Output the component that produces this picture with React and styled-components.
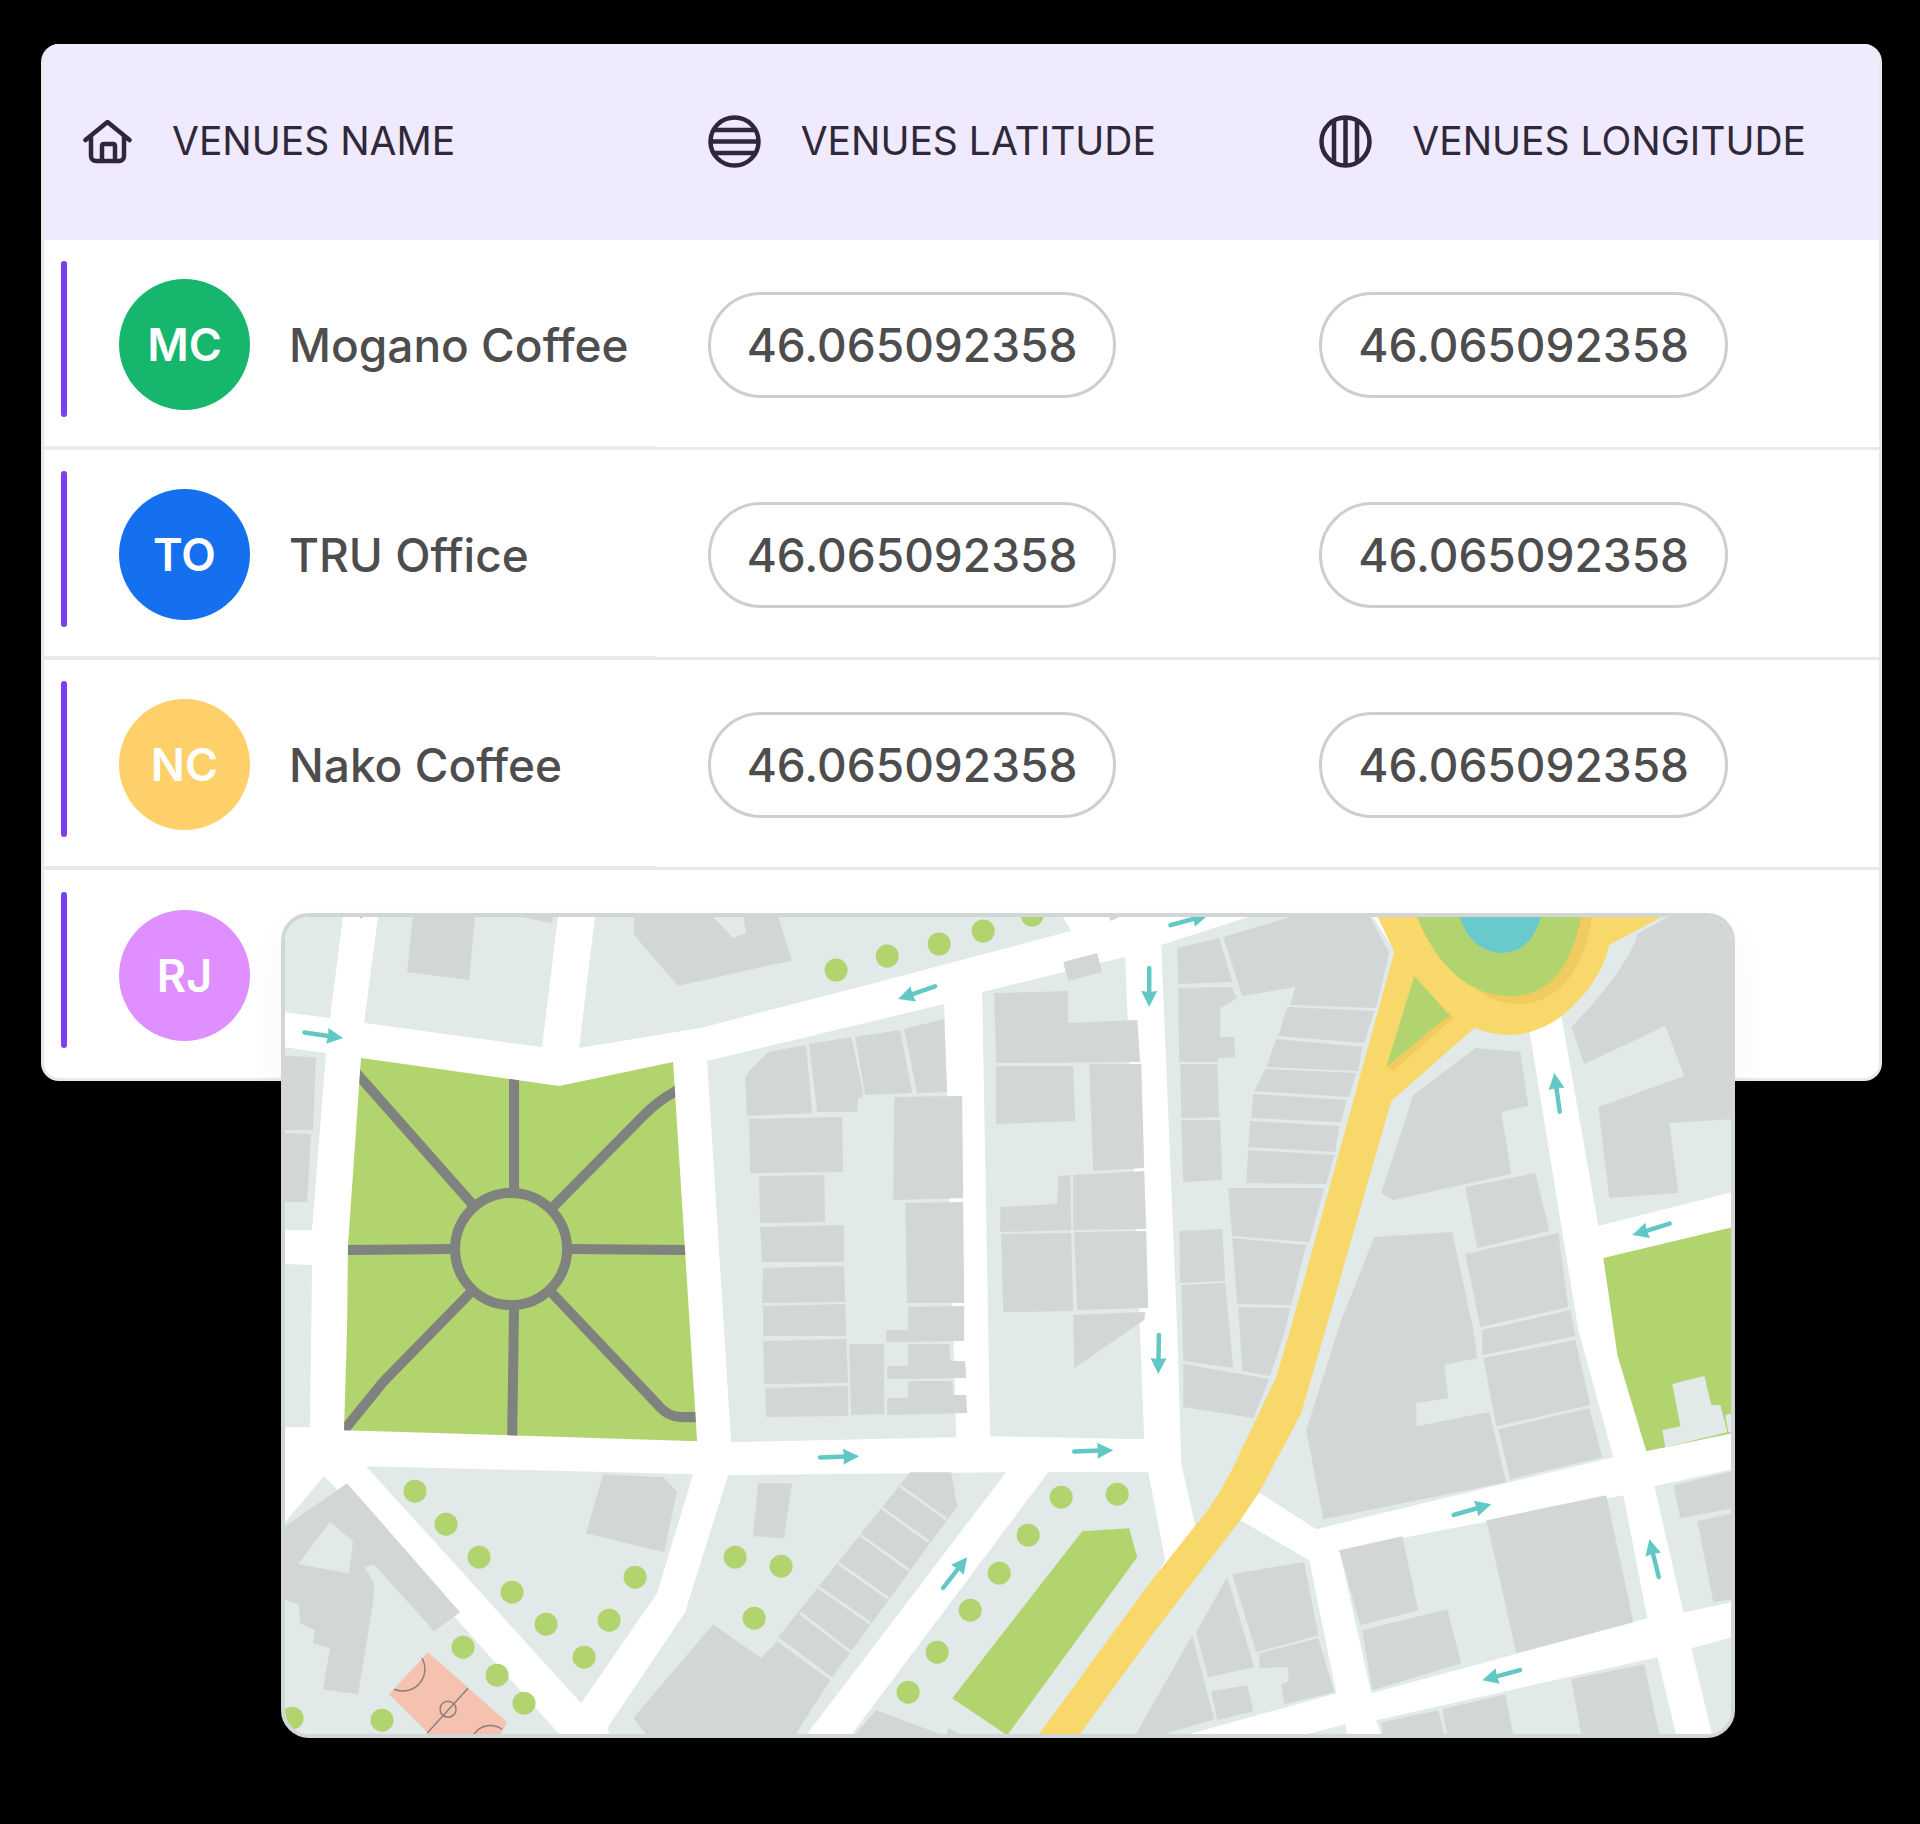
/**
 * @module VenuesOverview
 * @description Table of venues with their coordinates and a street map laid over its lower edge
 */

import styled, { createGlobalStyle } from "styled-components";

const c = {
  page: "#000000",
  surface: "#ffffff",
  header: "#efeafe",
  headerText: "#2e2838",
  text: "#4d4d4d",
  line: "#e9e9e9",
  pill: "#cecece",
  accent: "#7a3ff0",
  land: "#e1e9e9",
  building: "#d2d6d7",
  green: "#b2d46e",
  path: "#80827f",
  water: "#69cacc",
  arrow: "#62c8c5",
  road: "#ffffff",
  highway: "#f8d86a",
  highwayShade: "#efcb60",
  court: "#f4c2ae",
  courtLine: "#8f7f78",
};

const GlobalStyle = createGlobalStyle`
  *, *::before, *::after {
    box-sizing: border-box;
  }
  body {
    margin: 0;
    background: ${c.page};
    font-family: Inter, "Liberation Sans", sans-serif;
  }
`;

const Page = styled.main`
  padding: 44px 38px 80px 41px;
`;

const TableCard = styled.section`
  overflow: hidden;
  border: 3px solid ${c.line};
  border-top: none;
  border-radius: 18px;
  background: ${c.surface};
`;

const Table = styled.table`
  width: 100%;
  table-layout: fixed;
  border-collapse: separate;
  border-spacing: 0;
`;

const HeadCell = styled.th`
  height: 196px;
  padding: 0 0 2px ${(props) => (props.$first ? "39px" : "52px")};
  background: ${c.header};
  color: ${c.headerText};
  font-size: 39px;
  font-weight: 400;
  line-height: 48px;
  text-align: left;
  white-space: nowrap;
`;

const HeadLabel = styled.div`
  display: flex;
  align-items: center;
  gap: 40px;
`;

const HeadIcon = styled.svg`
  flex: none;
  fill: none;
  stroke: currentColor;
  stroke-width: 4.5;
  stroke-linecap: round;
  stroke-linejoin: round;
`;

const Cell = styled.td`
  height: 210px;
  padding: 3px 0 0 52px;
  border-bottom: 3px solid ${c.line};
  tr:last-child > & {
    height: 208px;
    border-bottom: none;
  }
`;

const NameCell = styled(Cell)`
  padding: 3px 0 0 17px;
  border-bottom-width: 4px;
`;

const Venue = styled.div`
  display: flex;
  align-items: center;
  color: ${c.text};
  font-size: 46px;
  font-weight: 500;
  line-height: 56px;
  white-space: nowrap;
`;

const Marker = styled.span`
  width: 6px;
  height: 156px;
  margin: 0 52px 12px 0;
  border-radius: 3px;
  background: ${c.accent};
`;

const Avatar = styled.span`
  display: grid;
  place-items: center;
  width: 131px;
  height: 131px;
  margin-right: 39px;
  border-radius: 50%;
  background: ${(props) => props.$color};
  color: ${c.surface};
  font-size: 45px;
  font-weight: 600;
`;

const Pill = styled.span`
  display: inline-block;
  padding: 22px 36px;
  border: 3px solid ${c.pill};
  border-radius: 53px;
  color: ${c.text};
  font-size: 46px;
  font-weight: 500;
  line-height: 56px;
  vertical-align: middle;
`;

const MapCard = styled.figure`
  position: relative;
  width: 79%;
  margin: -168px 0 0 240px;
  overflow: hidden;
  border: 4px solid ${c.building};
  border-radius: 28px;
  background: ${c.building};
  box-shadow: 0 16px 40px rgba(0, 0, 0, 0.04);
`;

const MapSvg = styled.svg`
  display: block;
  width: 100%;
  height: auto;
`;

function HomeIcon() {
  return (
    <HeadIcon width="49" height="45" viewBox="0 0 49 45" aria-hidden="true">
      <path d="M2.500 21 24.500 3 46.500 21M8 17v20a5 5 0 0 0 5 5h23a5 5 0 0 0 5-5V17" />
      <path d="M19 42V27q0-2 2-2h9q2 0 2 2v15" />
    </HeadIcon>
  );
}

function LatitudeIcon() {
  return (
    <HeadIcon width="53" height="53" viewBox="0 0 53 53" aria-hidden="true">
      <circle cx="26.5" cy="26.5" r="24" />
      <path d="M6 15h41M3 26.500h47M6 38h41" />
    </HeadIcon>
  );
}

function LongitudeIcon() {
  return (
    <HeadIcon width="53" height="53" viewBox="0 0 53 53" aria-hidden="true">
      <circle cx="26.5" cy="26.5" r="24" />
      <path d="M15 6v41M26.500 3v47M38 6v41" />
    </HeadIcon>
  );
}

const columns = [
  { label: "VENUES NAME", icon: HomeIcon },
  { label: "VENUES LATITUDE", icon: LatitudeIcon },
  { label: "VENUES LONGITUDE", icon: LongitudeIcon },
];

const venues = [
  { initials: "MC", name: "Mogano Coffee", color: "#16b76c", lat: "46.065092358", lng: "46.065092358" },
  { initials: "TO", name: "TRU Office", color: "#1570ef", lat: "46.065092358", lng: "46.065092358" },
  { initials: "NC", name: "Nako Coffee", color: "#fdd069", lat: "46.065092358", lng: "46.065092358" },
  { initials: "RJ", color: "#df8fff" },
];

// City blocks, the white left between them is the road network
const blocks = [
  "284,916 343,916 330,1018 284,1012",
  "378,916 364,1023 542,1047 558,916",
  "595,916 579,1048 700,1028 867,985 1071,931 1062,916",
  "284,1047 326,1053 312,1230 284,1230",
  "284,1264 312,1265 310,1427 284,1427",
  "707,1061 944,1004 956,1437 731,1442",
  "982,992 1125,957 1144,1439 990,1436",
  "1161,945 1251,916 1372,916 1400,960 1385,1120 1270,1440 1195,1526 1181,1463 1177,1330",
  "1440,1010 1529,1030 1578,1330 1613,1457 1316,1529 1255,1490 1320,1330 1390,1090",
  "1560,1010 1598,1226 1732,1192 1732,916 1600,916",
  "1654,1486 1732,1469 1732,1602 1683,1612",
  "1691,1648 1732,1637 1732,1735 1712,1735",
  "1339,1550 1623,1495 1647,1618 1371,1693",
  "1376,1720 1657,1657 1676,1735 1381,1735",
  "1240,1520 1309,1560 1336,1693 1185,1735 1060,1735 1210,1525",
  "1303,1735 1345,1724 1347,1735",
  "1048,1472 1148,1472 1165,1560 1060,1735 851,1735",
  "728,1475 1006,1472 806,1735 610,1735 607,1728 685,1612",
  "366,1466 693,1474 657,1593 581,1703",
  "324,1476 336,1488 455,1617 560,1735 284,1735 284,1523",
];

const buildings = [
  "413,916 475,916 469,980 407,972",
  "515,916 553,916 552,923",
  "634,916 634,935 678,986 770,965 792,961 778,916 743,916 746,933 733,938 712,916",
  "284,1056 316,1057 313,1130 284,1130",
  "284,1133 311,1134 307,1202 284,1202",
  "745,1078 749,1071 768,1052 806,1045 812,1113 747,1116",
  "809,1044 851,1037 863,1092 862,1097 858,1099 857,1112 817,1112",
  "855,1037 900,1030 912,1093 865,1095",
  "904,1029 944,1019 947,1092 917,1093",
  "749,1119 842,1117 843,1172 750,1173",
  "894,1097 962,1096 963,1198 893,1200",
  "759,1176 824,1175 825,1222 760,1223",
  "760,1227 844,1225 844,1262 762,1262",
  "763,1268 844,1266 845,1302 762,1303",
  "763,1306 845,1304 846,1336 763,1336",
  "763,1341 846,1339 848,1383 764,1384",
  "765,1388 848,1386 848,1416 766,1417",
  "849,1344 884,1344 884,1414 851,1415",
  "905,1203 963,1202 964,1303 907,1303",
  "908,1307 964,1306 964,1341 886,1342 886,1330 908,1330",
  "908,1344 949,1344 950,1361 965,1361 966,1378 887,1379 887,1366 908,1366",
  "908,1381 952,1381 953,1395 966,1395 967,1413 887,1415 887,1398 908,1398",
  "994,993 1068,991 1068,1023 1137,1020 1140,1062 996,1063",
  "996,1066 1073,1066 1075,1121 996,1124",
  "1089,1064 1141,1064 1144,1168 1093,1171",
  "1058,1176 1070,1175 1071,1230 1000,1232 1000,1207 1057,1204",
  "1073,1175 1144,1171 1146,1229 1073,1230",
  "1001,1234 1071,1233 1073,1311 1003,1312",
  "1074,1232 1146,1231 1148,1308 1077,1310",
  "1073,1315 1145,1312 1144,1320 1074,1368",
  "1063,962 1097,953 1102,972 1068,981",
  "1109,916 1122,916 1110,921",
  "1177,948 1219,938 1232,982 1178,984",
  "1223,937 1293,916 1369,916 1381,938 1389,953 1376,1008 1290,1005 1295,987 1242,996",
  "1178,988 1231,987 1237,998 1220,1008 1220,1037 1234,1037 1235,1057 1218,1058 1217,1062 1179,1062",
  "1180,1064 1217,1064 1219,1117 1181,1118",
  "1181,1120 1220,1120 1222,1180 1183,1182",
  "1179,1231 1222,1229 1225,1281 1180,1283",
  "1181,1285 1225,1283 1233,1368 1183,1361",
  "1183,1364 1269,1379 1253,1418 1183,1407",
  "1287,1007 1374,1011 1364,1043 1278,1036",
  "1276,1039 1362,1047 1358,1071 1266,1067",
  "1265,1069 1356,1073 1349,1097 1254,1091",
  "1253,1094 1346,1100 1341,1122 1251,1118",
  "1250,1121 1339,1126 1335,1152 1248,1147",
  "1248,1150 1334,1155 1326,1184 1246,1183",
  "1228,1188 1324,1188 1309,1242 1232,1236",
  "1232,1238 1306,1245 1291,1305 1237,1304",
  "1238,1307 1290,1308 1285,1330 1270,1376 1242,1371",
  "1475,1048 1520,1052 1528,1106 1501,1112 1511,1174 1393,1200 1381,1193 1413,1095",
  "1465,1187 1535,1173 1549,1231 1477,1248",
  "1465,1254 1558,1233 1568,1307 1480,1327",
  "1482,1330 1570,1310 1575,1336 1482,1355",
  "1483,1358 1575,1340 1590,1405 1496,1426",
  "1498,1429 1589,1408 1602,1457 1510,1479",
  "1374,1237 1452,1232 1473,1330 1477,1358 1444,1365 1448,1398 1416,1403 1416,1426 1489,1412 1506,1482 1323,1519 1306,1430 1341,1320",
  "1339,1550 1402,1536 1418,1610 1360,1625",
  "1362,1630 1447,1609 1461,1663 1372,1690",
  "1486,1520 1606,1495 1633,1622 1516,1653",
  "1673,1485 1732,1471 1732,1508 1680,1518",
  "1697,1521 1732,1513 1732,1599 1713,1602",
  "1381,1722 1438,1710 1444,1735 1383,1735",
  "1442,1709 1505,1694 1513,1735 1447,1735",
  "1571,1679 1644,1664 1659,1735 1581,1735",
  "1232,1574 1304,1562 1318,1635 1256,1652",
  "1227,1577 1254,1667 1208,1677 1196,1632",
  "1192,1635 1214,1719 1160,1735 1135,1735",
  "1211,1691 1247,1685 1253,1711 1217,1720",
  "1259,1653 1318,1638 1334,1692 1284,1704 1281,1684 1288,1681 1288,1667 1259,1668",
  "603,1474 663,1477 677,1491 664,1552 586,1533",
  "347,1483 460,1612 434,1631 374,1564 365,1567 374,1583 373,1603 358,1694 323,1689 330,1648 313,1643 315,1630 300,1623 299,1605 284,1599 284,1527",
  "758,1483 792,1483 784,1538 753,1536",
  "633,1718 713,1624 761,1658 777,1641 830,1680 795,1735 647,1735",
  "910,1472 951,1472 957,1506 832,1677 778,1637",
  "876,1710 938,1733 938,1735 854,1735",
  "948,1727 960,1735 946,1735",
];

// Land showing through a building or a park
const yards = [
  "330,1522 353,1541 349,1573 298,1564",
  "1662,1430 1680,1426 1672,1384 1704,1376 1711,1405 1720,1405 1727,1432 1665,1447",
  "1725,1415 1732,1413 1732,1432 1728,1432",
];

const parks = [
  "1603,1258 1732,1227 1732,1433 1646,1451 1617,1355 1612,1320",
  "1082,1531 1129,1528 1137,1557 1007,1735 952,1698",
];

const mainPark = "361,1058 559,1086 673,1062 697,1441 344,1430 347,1330 348,1245";

const trees = [
  [836, 970], [887, 956], [939, 944], [983, 931], [1032, 915],
  [415, 1491], [446, 1524], [479, 1557], [512, 1592], [546, 1624],
  [584, 1657], [609, 1620], [635, 1577], [463, 1647], [497, 1675],
  [524, 1703], [382, 1720], [292, 1718], [735, 1557], [781, 1566],
  [754, 1618], [1061, 1497], [1117, 1494], [1028, 1535], [999, 1573],
  [970, 1610], [937, 1652], [908, 1692],
];

// Tip of the arrow and its heading in degrees
const arrows = [
  [343, 1038, 8], [361, 919, 96], [898, 999, 161], [1149, 1007, 90],
  [1208, 915, -15], [1554, 1073, -98], [1632, 1235, 163], [859, 1456, -2],
  [1113, 1450, -2], [1158, 1374, 91], [967, 1557, -52], [1491, 1504, -16],
  [1649, 1539, -104], [1482, 1680, 165],
];

function StreetMap() {
  return (
    <MapSvg viewBox="285 917 1446 817" role="img" aria-label="Street map of the venues">
      <defs>
        <clipPath id="parkClip">
          <polygon points={mainPark} />
        </clipPath>
      </defs>
      <rect x="285" y="917" width="1446" height="817" fill={c.road} />
      <g fill={c.land}>
        {blocks.map((points) => (
          <polygon key={points} points={points} />
        ))}
      </g>
      <g fill={c.building}>
        {buildings.map((points) => (
          <polygon key={points} points={points} />
        ))}
        <path d="M1571 1027Q1626 970 1638 933L1670 916H1732V1119L1669 1123 1678 1193 1609 1198 1598 1107 1684 1076 1665 1026 1584 1064Z" />
      </g>
      <path
        d="M900 1486 946 1519M882 1508 929 1542M860 1535 909 1570M838 1563 888 1598M817 1586 870 1623M800 1613 852 1653M777 1638 832 1679"
        stroke={c.land}
        strokeWidth="3"
      />
      <g fill={c.green}>
        {parks.map((points) => (
          <polygon key={points} points={points} />
        ))}
        <polygon points={mainPark} />
      </g>
      <g fill={c.land}>
        {yards.map((points) => (
          <polygon key={points} points={points} />
        ))}
      </g>
      <g clipPath="url(#parkClip)" fill="none" stroke={c.path} strokeWidth="10">
        <circle cx="511" cy="1249" r="56" />
        <path d="M352 1068 474 1206M514 1070V1193M684 1085 674 1092Q658 1101 646 1113L552 1208M340 1250 455 1249M567 1249 694 1250M514 1305 512 1445M471 1292 383 1382 340 1435M551 1292 658 1405Q668 1417 682 1417H704" />
      </g>
      <g>
        <polygon points="428,1652 507,1722 500,1735 430,1735 389,1694" fill={c.court} />
        <g fill="none" stroke={c.courtLine} strokeWidth="1.500">
          <path d="M468 1688 427 1733M422 1658A22 22 0 0 1 394 1689M474 1734A20 20 0 0 1 502 1729" />
          <circle cx="448" cy="1709" r="8" />
        </g>
      </g>
      <path
        d="M1377 916 1394 952 1290 1330 1276 1377 1242 1448Q1220 1496 1198 1522L1150 1582 1038 1735H1079L1150 1637 1240 1520 1259 1492 1301 1413 1328 1320 1391 1101 1474 1028Q1520 1046 1560 1017 1600 985 1609 945L1663 916Z"
        fill={c.highway}
      />
      <path
        d="M1475 987Q1490 1004 1520 1004 1578 1000 1592 916H1570ZM1449 1012 1453 1018 1393 1071 1386 1067Z"
        fill={c.highwayShade}
      />
      <path
        d="M1416 916Q1450 996 1510 996 1566 996 1581 916ZM1414 976 1449 1015 1386 1067Z"
        fill={c.green}
      />
      <path d="M1459 916Q1470 952 1502 953 1531 952 1541 916Z" fill={c.water} />
      <g fill={c.green}>
        {trees.map(([x, y]) => (
          <circle key={`${x}-${y}`} cx={x} cy={y} r="11.500" />
        ))}
      </g>
      {arrows.map(([x, y, angle]) => (
        <g key={`${x}-${y}`} transform={`translate(${x} ${y}) rotate(${angle})`}>
          <path d="M-39 0H-13" stroke={c.arrow} strokeWidth="4.500" strokeLinecap="round" />
          <path d="M0 0-16-8-15 0-16 8Z" fill={c.arrow} />
        </g>
      ))}
    </MapSvg>
  );
}

export default function App() {
  return (
    <Page>
      <GlobalStyle />
      <TableCard>
        <Table>
          <thead>
            <tr>
              {columns.map(({ label, icon: Icon }, i) => (
                <HeadCell key={label} scope="col" $first={i === 0}>
                  <HeadLabel>
                    <Icon />
                    {label}
                  </HeadLabel>
                </HeadCell>
              ))}
            </tr>
          </thead>
          <tbody>
            {venues.map((v) => (
              <tr key={v.initials}>
                <NameCell>
                  <Venue>
                    <Marker />
                    <Avatar $color={v.color}>{v.initials}</Avatar>
                    {v.name}
                  </Venue>
                </NameCell>
                <Cell>{v.lat && <Pill>{v.lat}</Pill>}</Cell>
                <Cell>{v.lng && <Pill>{v.lng}</Pill>}</Cell>
              </tr>
            ))}
          </tbody>
        </Table>
      </TableCard>
      <MapCard>
        <StreetMap />
      </MapCard>
    </Page>
  );
}
